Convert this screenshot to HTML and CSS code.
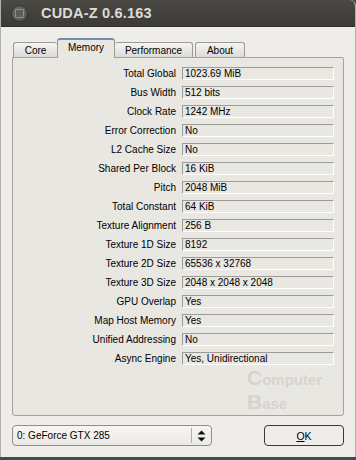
FILE: index.html
```html
<!DOCTYPE html>
<html>
<head>
<meta charset="utf-8">
<link rel="stylesheet" href="styles.css">
</head>
<body>
<div class="window">
  <div class="titlebar">
    <span class="close"><span class="close-in"></span></span>
    <span class="title">CUDA-Z 0.6.163</span>
  </div>
  <div class="content">
    <div class="tabs">
      <div class="tab tab-core">Core</div>
      <div class="tab tab-sel">Memory</div>
      <div class="tab tab-perf">Performance</div>
      <div class="tab tab-about">About</div>
    </div>
    <div class="pane">
      <div class="grid">
        <div class="lbl">Total Global</div><div class="val">1023.69 MiB</div>
        <div class="lbl">Bus Width</div><div class="val">512 bits</div>
        <div class="lbl">Clock Rate</div><div class="val">1242 MHz</div>
        <div class="lbl">Error Correction</div><div class="val">No</div>
        <div class="lbl">L2 Cache Size</div><div class="val">No</div>
        <div class="lbl">Shared Per Block</div><div class="val">16 KiB</div>
        <div class="lbl">Pitch</div><div class="val">2048 MiB</div>
        <div class="lbl">Total Constant</div><div class="val">64 KiB</div>
        <div class="lbl">Texture Alignment</div><div class="val">256 B</div>
        <div class="lbl">Texture 1D Size</div><div class="val">8192</div>
        <div class="lbl">Texture 2D Size</div><div class="val">65536 x 32768</div>
        <div class="lbl">Texture 3D Size</div><div class="val">2048 x 2048 x 2048</div>
        <div class="lbl">GPU Overlap</div><div class="val">Yes</div>
        <div class="lbl">Map Host Memory</div><div class="val">Yes</div>
        <div class="lbl">Unified Addressing</div><div class="val">No</div>
        <div class="lbl">Async Engine</div><div class="val">Yes, Unidirectional</div>
      </div>
      <div class="watermark">
        <div class="wm-line"><span class="wm-big">C</span><span class="wm-small">omputer</span></div>
        <div class="wm-line"><span class="wm-big">B</span><span class="wm-small">ase</span></div>
      </div>
    </div>
    <div class="footer">
      <div class="combo">
        <span class="combo-text">0: GeForce GTX 285</span>
        <span class="combo-btn">
          <svg width="9" height="12" viewBox="0 0 9 12"><path d="M4.5 0.5 L8.5 4.5 L0.5 4.5 Z" fill="#111"/><path d="M0.5 7.5 L8.5 7.5 L4.5 11.5 Z" fill="#111"/></svg>
        </span>
      </div>
      <div class="ok"><span class="u">O</span>K</div>
    </div>
  </div>
</div>
<div class="taskbar"></div>
</body>
</html>
```

FILE: styles.css
```css
html, body {
  margin: 0;
  padding: 0;
  background: #3d434d;
  width: 356px;
  height: 460px;
  overflow: hidden;
  font-family: "Liberation Sans", Arial, sans-serif;
  font-size: 10px;
  color: #000;
}
.window {
  height: 457px;
  background: #efede9;
  display: flex;
  flex-direction: column;
  box-sizing: border-box;
  border-left: 1px solid #b3b1ac;
  border-right: 1px solid #b3b1ac;
  border-top-right-radius: 6px;
  overflow: hidden;
}
.titlebar {
  height: 27px;
  flex: none;
  background: linear-gradient(#4a4944, #3b3a36);
  display: flex;
  align-items: center;
  padding-left: 10px;
  border-bottom: 1px solid #2e2d2a;
  box-sizing: border-box;
}
.close {
  width: 17px;
  height: 17px;
  border-radius: 50%;
  background: radial-gradient(circle at 50% 40%, #6a6964, #53524e);
  border: 1px solid #33322f;
  box-sizing: border-box;
  display: flex;
  align-items: center;
  justify-content: center;
}
.close-in {
  width: 7px;
  height: 7px;
  border: 1px solid #8f8e89;
  background: #5d5c58;
  border-radius: 1px;
}
.title {
  margin-left: 13px;
  font-weight: bold;
  font-size: 14.5px;
  color: #dfdbd2;
  letter-spacing: 0.2px;
}
.content {
  flex: 1;
  padding: 11px 11px 0 11px;
  display: flex;
  flex-direction: column;
}
.tabs {
  display: flex;
  align-items: flex-end;
  height: 19px;
  padding-left: 1px;
  position: relative;
  z-index: 2;
}
.tab {
  height: 15px;
  box-sizing: border-box;
  border: 1px solid #9b9a96;
  border-bottom: none;
  border-radius: 3px 3px 0 0;
  background: linear-gradient(#f6f5f3, #dddbd6);
  text-align: center;
  line-height: 15px;
}
.tab-core { width: 44px; border-right: none; }
.tab-sel {
  width: 58px;
  line-height: 16px;
  background: #e9e7e2;
  border-top: 2px solid #6f8db1;
  margin-bottom: -1px;
  height: 20px;
}
.tab-perf { width: 78px; border-left: none; }
.tab-about { width: 50px; margin-left: 2px; }
.pane {
  height: 359px;
  box-sizing: border-box;
  border: 1px solid #a3a29e;
  border-radius: 0 2px 3px 3px;
  background: #e9e7e2;
  padding: 9px 9px 0 0;
  display: flex;
  flex-direction: column;
}
.grid {
  display: grid;
  grid-template-columns: 1fr 152px;
  column-gap: 6px;
  row-gap: 6px;
}
.lbl {
  text-align: right;
  height: 13px;
  line-height: 13px;
  white-space: nowrap;
}
.val {
  height: 13px;
  box-sizing: border-box;
  border-top: 1px solid #9c9b97;
  border-left: 1px solid #9c9b97;
  border-right: 1px solid #ffffff;
  border-bottom: 1px solid #ffffff;
  padding-left: 2px;
  line-height: 11px;
  white-space: nowrap;
}
.watermark {
  margin-top: auto;
  margin-bottom: 1px;
  margin-left: 234px;
  color: #d6d4cf;
  font-weight: bold;
  display: flex;
  flex-direction: column;
}
.wm-line {
  display: flex;
  align-items: baseline;
}
.wm-big { font-size: 21px; }
.wm-small { font-size: 15px; }
.footer {
  margin-top: 9px;
  display: flex;
  justify-content: space-between;
  height: 21px;
}
.combo {
  width: 200px;
  box-sizing: border-box;
  border: 1px solid #8f8e8a;
  border-radius: 4px;
  background: linear-gradient(#f7f6f4, #ebe9e5);
  display: flex;
  align-items: center;
}
.combo-text {
  flex: 1;
  padding-left: 4px;
}
.combo-btn {
  width: 19px;
  height: 15px;
  border-left: 1px solid #b0afab;
  display: flex;
  align-items: center;
  justify-content: center;
}
.ok {
  width: 80px;
  box-sizing: border-box;
  border: 1px solid #3a3936;
  border-radius: 4px;
  background: #efede9;
  display: flex;
  align-items: center;
  justify-content: center;
  font-size: 10.5px;
}
.u { text-decoration: underline; }
.taskbar {
  height: 3px;
  background: #434a55;
}
```
